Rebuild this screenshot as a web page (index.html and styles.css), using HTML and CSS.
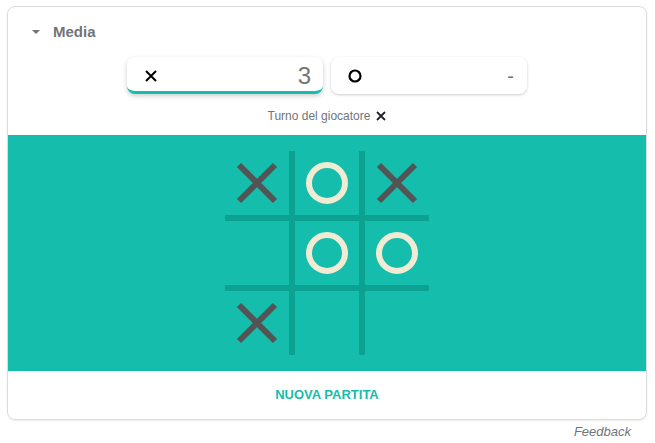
FILE: index.html
```html
<!DOCTYPE html>
<html lang="it">
<head>
<meta charset="utf-8">
<title>Tris</title>
<link rel="stylesheet" href="styles.css">
</head>
<body>
<div class="card">
  <div class="header">
    <span class="caret"></span>
    <span class="title">Media</span>
  </div>
  <div class="scores">
    <div class="score active">
      <svg class="icon-x" viewBox="0 0 12 12" width="12" height="12"><path d="M1 1L11 11M11 1L1 11" stroke="#000" stroke-width="2" fill="none"/></svg>
      <span class="num">3</span>
    </div>
    <div class="score">
      <svg class="icon-o" viewBox="0 0 14 14" width="14" height="14"><circle cx="7" cy="7" r="5.5" stroke="#000" stroke-width="2.2" fill="none"/></svg>
      <span class="num dash">-</span>
    </div>
  </div>
  <div class="turn">
    <span>Turno del giocatore</span>
    <svg viewBox="0 0 10 10" width="10" height="10"><path d="M1 1L9 9M9 1L1 9" stroke="#202124" stroke-width="1.8" fill="none"/></svg>
  </div>
  <div class="board-area">
    <div class="board">
      <div class="cell"><svg viewBox="0 0 64 64"><path class="x" d="M14 14L50 50M50 14L14 50"/></svg></div>
      <div class="cell"><svg viewBox="0 0 64 64"><circle class="o" cx="32" cy="32" r="18"/></svg></div>
      <div class="cell"><svg viewBox="0 0 64 64"><path class="x" d="M14 14L50 50M50 14L14 50"/></svg></div>
      <div class="cell"></div>
      <div class="cell"><svg viewBox="0 0 64 64"><circle class="o" cx="32" cy="32" r="18"/></svg></div>
      <div class="cell"><svg viewBox="0 0 64 64"><circle class="o" cx="32" cy="32" r="18"/></svg></div>
      <div class="cell"><svg viewBox="0 0 64 64"><path class="x" d="M14 14L50 50M50 14L14 50"/></svg></div>
      <div class="cell"></div>
      <div class="cell"></div>
    </div>
  </div>
  <div class="footer-btn">NUOVA PARTITA</div>
</div>
<div class="feedback">Feedback</div>
</body>
</html>
```

FILE: styles.css
```css
html, body {
  margin: 0;
  padding: 0;
  background: #fff;
  font-family: "Liberation Sans", Arial, sans-serif;
}
.card {
  margin: 6px 0 0 7px;
  width: 638px;
  border: 1px solid #dadce0;
  border-radius: 8px;
  overflow: hidden;
  box-shadow: 0 1px 2px rgba(0,0,0,0.08);
}
.header {
  height: 48px;
  display: flex;
  align-items: center;
  padding-left: 24px;
}
.caret {
  width: 0;
  height: 0;
  border-left: 4px solid transparent;
  border-right: 4px solid transparent;
  border-top: 4px solid #70757a;
  margin-right: 13px;
  margin-top: 1px;
}
.title {
  font-size: 15px;
  font-weight: bold;
  color: #70757a;
}
.scores {
  display: flex;
  justify-content: center;
  gap: 8px;
  padding-top: 2px;
}
.score {
  width: 196px;
  height: 37px;
  box-sizing: border-box;
  border-radius: 8px;
  box-shadow: 0 1px 3px rgba(0,0,0,0.2);
  display: flex;
  align-items: center;
  justify-content: space-between;
  padding: 0 12px 0 18px;
  background: #fff;
}
.score.active {
  border-bottom: 3px solid #14bdac;
  box-shadow: 0 2px 5px rgba(0,0,0,0.2);
  padding-top: 3px;
}
.icon-x, .icon-o {
  display: block;
}
.icon-o {
  margin-left: -1px;
}
.num {
  font-size: 24px;
  color: #757575;
  line-height: 1;
}
.dash {
  font-size: 20px;
  margin-right: 1px;
}
.turn {
  height: 41px;
  box-sizing: border-box;
  padding-top: 14px;
  display: flex;
  justify-content: center;
  align-items: flex-start;
  gap: 6px;
  font-size: 12px;
  line-height: 16px;
  color: #70757a;
}
.turn svg {
  margin-top: 3px;
}
.board-area {
  background: #14bdac;
  padding: 16px 0 16px;
  display: flex;
  justify-content: center;
}
.board {
  display: grid;
  grid-template-columns: repeat(3, 64px);
  grid-template-rows: repeat(3, 64px);
  gap: 6px;
  background: #0da192;
}
.cell {
  background: #14bdac;
}
.cell svg {
  display: block;
  width: 64px;
  height: 64px;
}
.x {
  stroke: #545454;
  stroke-width: 6;
  fill: none;
}
.o {
  stroke: #f2ebd3;
  stroke-width: 6;
  fill: none;
}
.footer-btn {
  height: 48px;
  line-height: 48px;
  text-align: center;
  font-size: 13px;
  font-weight: bold;
  color: #14bdac;
}
.feedback {
  width: 631px;
  text-align: right;
  margin-top: 4px;
  font-size: 13px;
  font-style: italic;
  color: #70757a;
  line-height: 16px;
}
```
